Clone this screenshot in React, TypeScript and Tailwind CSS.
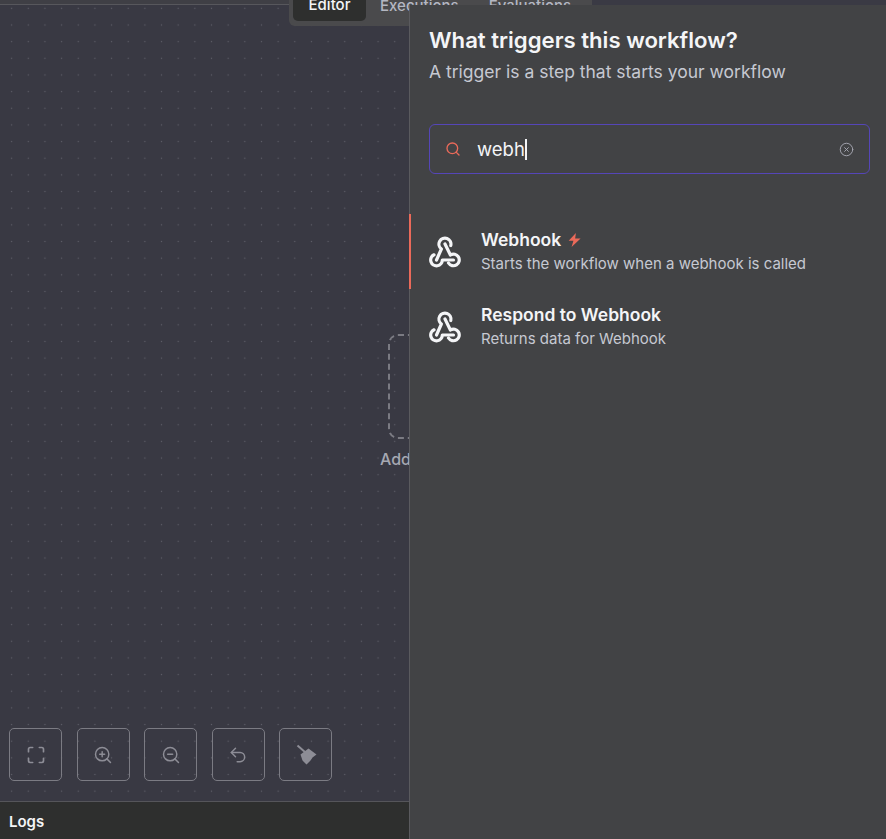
import React from "react";
import { CircleX, Maximize, Search, Undo2, ZoomIn, ZoomOut } from "lucide-react";

const WebhookIcon = () => (
  <svg
    width="32"
    height="32"
    viewBox="0 0 32 32"
    fill="none"
    stroke="currentColor"
    strokeWidth="3.2"
    strokeLinecap="round"
    strokeLinejoin="round"
    className="shrink-0"
  >
    <path d="M7.5 24 L12.4 13 A6 6 0 1 1 21.8 9.5" />
    <path d="M24.5 24 H13.3 A5.8 5.8 0 1 1 5 18.8" />
    <path d="M16 8 L21.4 19 A5.8 5.8 0 1 1 19.5 27" />
  </svg>
);

const BroomIcon = () => (
  <svg width="24" height="24" viewBox="0 0 24 24" fill="currentColor" stroke="none">
    <path d="M3.5 2.5 L11.5 9.5" stroke="currentColor" strokeWidth="2" />
    <path d="M6.5 11.5 L14.5 5.5 L22.5 11.5 L18.5 14.5 L16.5 17.5 L12.5 21.5 L8.5 17.5 Z" />
  </svg>
);

const BoltIcon = () => (
  <svg width="13" height="14" viewBox="0 0 12 12" preserveAspectRatio="none" className="text-[#ea6a5a]" fill="currentColor">
    <path d="M7.3 0 L0.6 6.7 H5 L3.3 12 L11.6 4.7 H6.6 Z" />
  </svg>
);

const canvasButtons = [
  <Maximize size={20} strokeWidth={2} />,
  <ZoomIn size={20} strokeWidth={1.75} />,
  <ZoomOut size={20} strokeWidth={1.75} />,
  <Undo2 size={20} strokeWidth={1.75} />,
  <BroomIcon />,
];

const nodes = [
  {
    title: "Webhook",
    description: "Starts the workflow when a webhook is called",
    trigger: true,
  },
  {
    title: "Respond to Webhook",
    description: "Returns data for Webhook",
    trigger: false,
  },
];

const App = () => {
  return (
    <div className="relative h-[839px] w-[886px] overflow-hidden bg-[#3a3a44] font-['Inter',sans-serif] text-white">
      <div className="flex h-full w-[409px] flex-col">
        <div className="h-[5px] border-b border-[#57575c] bg-[#3f3f45]" />
        <div className="relative flex-1 bg-[#393943] bg-[radial-gradient(circle,#5f5f69_0.8px,transparent_1px)] bg-[length:16.67px_16.67px] bg-[position:3.3px_-5px]">
          <div className="absolute bottom-[20px] left-[9px] flex gap-[14.5px]">
            {canvasButtons.map((icon, index) => (
              <button
                key={index}
                className="flex h-[53px] w-[53px] items-center justify-center rounded-[5px] border border-[#7b7b83] text-[#8d8d96]"
              >
                {icon}
              </button>
            ))}
          </div>
        </div>
        <div className="flex h-[38px] items-center border-t border-[#55555a] bg-[#2e2f2e] px-[9px] pt-[4px] text-[15px] font-semibold text-[#f4f5f7]">
          Logs
        </div>
      </div>

      {/* tab switcher sits on top of the canvas */}
      <div className="absolute left-[289px] top-0 flex h-[26px] w-[303px] items-start rounded-b-[6px] bg-[#4a4a4c] px-[4px] text-[15px] font-medium">
        <div className="flex h-[21px] w-[73px] items-end justify-center rounded-b-[5px] bg-[#2e2f2e] pb-[6px] leading-[20px] text-[#f4f5f7]">
          Editor
        </div>
        <div className="ml-[14px] mt-[-4px] leading-[20px] text-[#b4b7c2]">Executions</div>
        <div className="ml-[30px] mt-[-4px] leading-[20px] text-[#b4b7c2]">Evaluations</div>
      </div>

      {/* add first step node */}
      <div className="absolute left-[388px] top-[334px] h-[105px] w-[105px] rounded-[10px] border-2 border-dashed border-[#7b7b83]" />
      <div className="absolute left-[380px] top-[449px] text-base font-medium leading-[20px] text-[#a6a8b2]">
        Add first step...
      </div>

      {/* node creator panel */}
      <div className="absolute bottom-0 right-0 top-[5px] flex w-[477px] flex-col border-l border-[#5a5a5e] bg-[#424345]">
        <div className="px-[19px] pt-[20px]">
          <h1 className="text-[22.15px] font-semibold leading-[30px] text-[#f4f5f7]">What triggers this workflow?</h1>
          <p className="mt-[5px] text-[17.5px] leading-[24px] text-[#c6c9d2]">A trigger is a step that starts your workflow</p>
        </div>
        <div className="mx-[19px] mt-[40px] flex h-[50px] w-[441px] items-center rounded-[6px] border border-[#5546b8] px-[15px]">
          <Search size={16} strokeWidth={2} className="text-[#ea6a5a]" />
          <span className="ml-[16px] text-[18.5px] leading-[24px] text-[#f4f5f7]">webh</span>
          <span className="h-[21px] w-[2px] bg-[#f4f5f7]" />
          <CircleX size={15} strokeWidth={1.5} className="ml-auto text-[#a6a8b2]" />
        </div>
        <div className="-ml-px mt-[40px] flex flex-col">
          {nodes.map((node) => (
            <div
              key={node.title}
              className={`flex h-[75px] items-center border-l-2 pb-[2px] pl-[18px] ${
                node.trigger ? "border-[#ea6a5a]" : "border-transparent"
              }`}
            >
              <div className="mt-[2px] text-[#f4f5f7]">
                <WebhookIcon />
              </div>
              <div className="ml-[20px]">
                <div className="flex items-center gap-[7px] text-[17.5px] font-semibold leading-[24px] text-[#f4f5f7]">
                  {node.title}
                  {node.trigger && <BoltIcon />}
                </div>
                <div className="mt-[2px] text-[15px] leading-[20px] text-[#c6c9d2]">{node.description}</div>
              </div>
            </div>
          ))}
        </div>
      </div>
    </div>
  );
};

export default App;
